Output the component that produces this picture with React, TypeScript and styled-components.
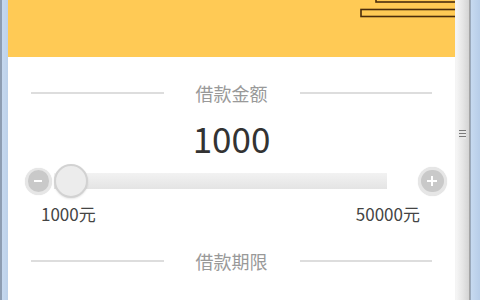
import React from 'react';
import styled, { createGlobalStyle } from 'styled-components';

const GlobalStyle = createGlobalStyle`
  html, body {
    margin: 0;
    padding: 0;
    width: 480px;
    height: 300px;
    overflow: hidden;
    background: #ffffff;
    font-family: "Noto Sans CJK SC", "Noto Sans", sans-serif;
  }
`

const Frame = styled.div`
  display: flex;
  width: 480px;
  height: 300px;
`

const LeftEdge = styled.div`
  width: 8px;
  flex-shrink: 0;
  background: linear-gradient(to right, #8d9db2 0, #8d9db2 2px, #c5d8ef 2px, #bcd1ea 8px);
`

const RightEdge = styled.div`
  width: 10px;
  flex-shrink: 0;
  background: linear-gradient(to right, #9aa9bb 0, #9aa9bb 1px, #c7daf0 1px, #b7cde8 10px);
`

const Scrollbar = styled.div`
  width: 15px;
  flex-shrink: 0;
  display: flex;
  align-items: flex-start;
  justify-content: center;
  padding-top: 130px;
  box-sizing: border-box;
  border-left: 1px solid #f4f4f4;
  border-right: 1px solid #a4a4a4;
  background: linear-gradient(to right, #f6f6f6, #e6e6e6 50%, #d4d4d4);
`

const Grip = styled.div`
  width: 7px;
  height: 9px;
  background: repeating-linear-gradient(to bottom, #7a7a7a 0, #7a7a7a 1px, #e8e8e8 1px, #e8e8e8 3px);
`

const Page = styled.div`
  flex: 1;
  display: flex;
  flex-direction: column;
  background: #ffffff;
`

const Header = styled.div`
  height: 57px;
  background: #ffca55;
  display: flex;
  justify-content: flex-end;
  align-items: flex-start;
`

const SectionTitle = styled.div<{ $top: number }>`
  display: flex;
  align-items: center;
  padding: 0 23px;
  margin-top: ${p => p.$top}px;
  height: 26px;
`

const Rule = styled.div`
  flex: 1;
  height: 2px;
  background: #dddddd;
`

const TitleText = styled.span`
  margin: 0 32px;
  font-size: 18px;
  color: #999999;
  line-height: 26px;
`

const Amount = styled.div`
  margin-top: 8px;
  height: 48px;
  line-height: 48px;
  text-align: center;
  font-size: 35px;
  color: #333333;
`

const SliderRow = styled.div`
  display: flex;
  align-items: center;
  height: 36px;
  padding: 0 8px 0 17px;
  margin-top: 1px;
`

const RoundButton = styled.div<{ $size: number }>`
  width: ${p => p.$size}px;
  height: ${p => p.$size}px;
  flex-shrink: 0;
  border-radius: 50%;
  background: #e6e6e6;
  display: flex;
  align-items: center;
  justify-content: center;
  box-shadow: 0 0 1px rgba(0, 0, 0, 0.15);
`

const ButtonCore = styled.div`
  width: 78%;
  height: 78%;
  border-radius: 50%;
  background: #c9c9c9;
  display: flex;
  align-items: center;
  justify-content: center;
`

const TrackArea = styled.div`
  position: relative;
  width: 333px;
  height: 36px;
  margin-left: 2px;
  margin-right: 31px;
  display: flex;
  align-items: center;
`

const Track = styled.div`
  width: 100%;
  height: 16px;
  background: linear-gradient(to bottom, #f2f2f2, #e4e4e4);
`

const Thumb = styled.div`
  position: absolute;
  left: 0;
  top: 1px;
  width: 30px;
  height: 30px;
  border-radius: 50%;
  background: #ececec;
  border: 2px solid #d2d2d2;
  box-shadow: 0 1px 2px rgba(0, 0, 0, 0.1);
`

const Limits = styled.div`
  display: flex;
  justify-content: space-between;
  padding: 0 35px 0 33px;
  margin-top: 3px;
  font-size: 17px;
  line-height: 24px;
  color: #444444;
`

const HeaderBars = () => (
  <svg width="100" height="20" viewBox="0 0 100 20">
    <rect x="21" y="-4" width="82" height="6" fill="#ffca55" stroke="#4a2c0c" strokeWidth="1.6" />
    <rect x="6" y="9.5" width="97" height="7" fill="#ffca55" stroke="#4a2c0c" strokeWidth="1.6" />
  </svg>
);

const Minus = () => (
  <svg width="10" height="10" viewBox="0 0 10 10">
    <rect x="1" y="4" width="8" height="2" fill="#ffffff" />
  </svg>
);

const Plus = () => (
  <svg width="12" height="12" viewBox="0 0 12 12">
    <rect x="1" y="5" width="10" height="2" fill="#ffffff" />
    <rect x="5" y="1" width="2" height="10" fill="#ffffff" />
  </svg>
);

const Title = ({ text, top }: { text: string; top: number }) => (
  <SectionTitle $top={top}>
    <Rule />
    <TitleText>{text}</TitleText>
    <Rule />
  </SectionTitle>
);

export default function App() {
  return (
    <>
      <GlobalStyle />
      <Frame>
        <LeftEdge />
        <Page>
          <Header>
            <HeaderBars />
          </Header>
          <Title text="借款金额" top={23} />
          <Amount>1000</Amount>
          <SliderRow>
            <RoundButton $size={27}>
              <ButtonCore><Minus /></ButtonCore>
            </RoundButton>
            <TrackArea>
              <Track />
              <Thumb />
            </TrackArea>
            <RoundButton $size={29}>
              <ButtonCore><Plus /></ButtonCore>
            </RoundButton>
          </SliderRow>
          <Limits>
            <span>1000元</span>
            <span>50000元</span>
          </Limits>
          <Title text="借款期限" top={22} />
        </Page>
        <Scrollbar>
          <Grip />
        </Scrollbar>
        <RightEdge />
      </Frame>
    </>
  );
}
